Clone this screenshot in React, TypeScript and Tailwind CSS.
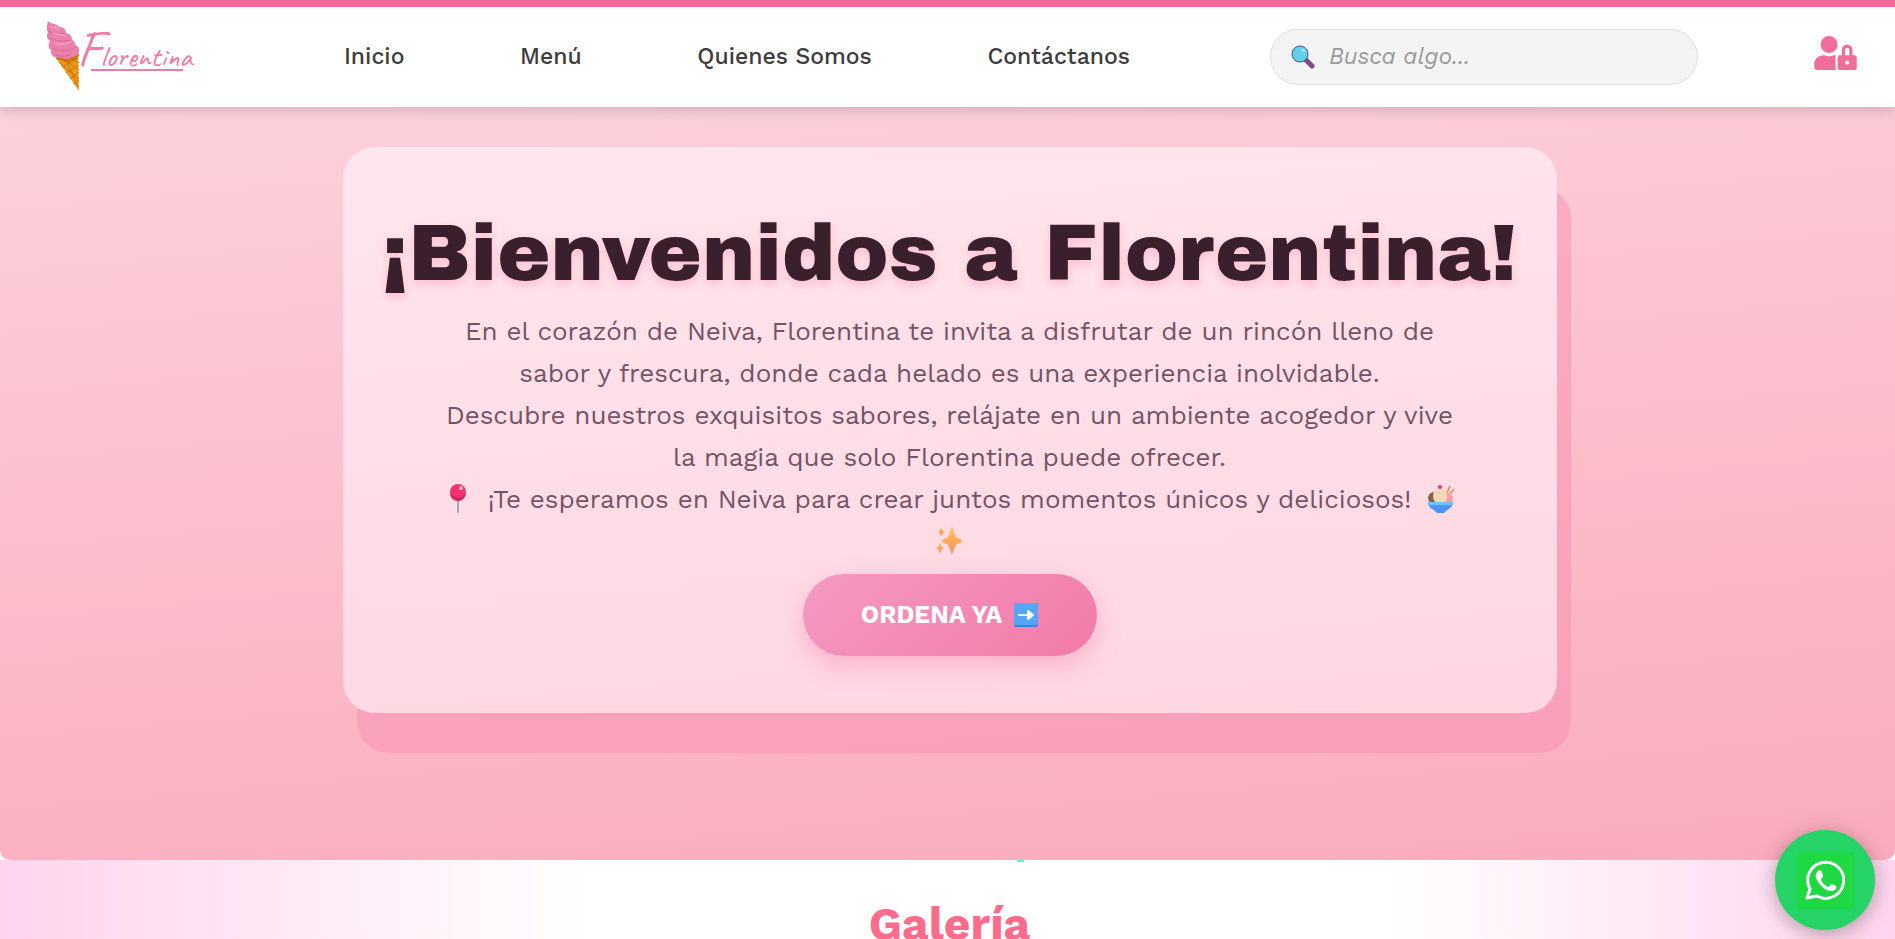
import React from "react";
import { FaUserLock } from "react-icons/fa";

const links = ["Inicio", "Menú", "Quienes Somos", "Contáctanos"];

export default function App() {
  return (
    <div className="min-h-screen bg-white font-['Work_Sans',Inter,sans-serif]">
      <Header />
      <main>
        <Hero />
        <Gallery />
      </main>
      <WhatsAppButton />
    </div>
  );
}

function Header() {
  return (
    <header className="relative z-10 flex h-[107px] items-center border-t-[7px] border-[#f26c99] bg-white pr-[38px] pb-[2px] pl-[44px] shadow-[0_4px_12px_rgba(0,0,0,0.15)]">
      <a href="#" aria-label="Florentina" className="mr-[144px] shrink-0">
        <Logo />
      </a>
      <nav className="flex grow items-center pt-[2px]">
        <ul className="flex grow justify-between whitespace-nowrap">
          {links.map((link) => (
            <li key={link}>
              <a href="#" className="text-[23px] font-medium text-[#3d3d3d]">
                {link}
              </a>
            </li>
          ))}
        </ul>
      </nav>
      {/*Search*/}
      <div className="relative mt-[2px] mr-[116px] ml-[140px] w-[428px]">
        <input
          type="text"
          aria-label="Buscar"
          placeholder="Busca algo..."
          className="h-14 w-full rounded-full border border-[#ddd] bg-[#f4f4f4] pr-5 pb-[2px] pl-[58px] text-[23px] text-[#333] italic placeholder:text-[#999] focus:outline-none"
        />
        <Magnifier />
      </div>
      <a href="#" aria-label="Iniciar sesión" className="-mt-1.5">
        <FaUserLock className="h-[34px] w-[43px] text-[#f26c99]" />
      </a>
    </header>
  );
}

function Hero() {
  return (
    <section className="flex justify-center rounded-b-[10px] bg-[linear-gradient(175deg,#fcd2dc_0%,#fcc3d0_35%,#faabbd_100%)] pt-10 pr-10 pb-[147px] pl-11">
      <div className="flex w-full max-w-[1214px] flex-col items-center rounded-[32px] bg-[linear-gradient(175deg,#ffe6ed,#ffd6e2)] pt-[50px] pb-[57px] text-center shadow-[14px_40px_0_rgba(247,144,176,0.5)]">
        <h1 className="font-['Archivo_Black',Inter,sans-serif] text-[80px] leading-[113px] font-normal whitespace-nowrap text-[#3a1f2d] [text-shadow:0_4px_10px_rgba(255,107,149,0.3)]">
          ¡Bienvenidos a Florentina!
        </h1>
        <p className="text-[26px] leading-[42px] font-normal text-[#755264]">
          En el corazón de Neiva, Florentina te invita a disfrutar de un rincón lleno de
          <br />
          sabor y frescura, donde cada helado es una experiencia inolvidable.
          <br />
          Descubre nuestros exquisitos sabores, relájate en un ambiente acogedor y vive
          <br />
          la magia que solo Florentina puede ofrecer.
          <br />
          <span className="flex items-center justify-center gap-4">
            <Pin />
            ¡Te esperamos en Neiva para crear juntos momentos únicos y deliciosos!
            <IceCream />
          </span>
          <span className="flex h-[42px] items-center justify-center">
            <Sparkles />
          </span>
        </p>
        <button className="mt-3 flex h-[82px] w-[294px] items-center justify-center gap-3 rounded-full bg-[linear-gradient(135deg,#f49ac2,#f27aa8)] text-[25px] font-bold text-white shadow-[0_10px_25px_rgba(242,122,168,0.4)]">
          ORDENA YA
          <ArrowBadge />
        </button>
      </div>
    </section>
  );
}

function Gallery() {
  return (
    <section className="relative bg-[linear-gradient(90deg,#ffd4ee_0%,#fff_31%,#fff_73%,#ffd4ee_100%)] pt-9 pb-4 pl-1">
      <div className="absolute top-0 left-[1017px] h-[2px] w-[7px] bg-[#4fffcf]" />
      <h2 className="text-center text-[46px] leading-[56px] font-bold text-[#ff6b8b]">
        Galería
      </h2>
    </section>
  );
}

function WhatsAppButton() {
  return (
    <a
      href="#"
      aria-label="WhatsApp"
      className="fixed right-5 bottom-[9px] z-20 flex size-[100px] items-center justify-center rounded-full bg-[#25d366] shadow-[0_4px_20px_rgba(0,0,0,0.3)]"
    >
      <span className="flex size-[57px] items-center justify-center bg-[#1fd943]">
        <WhatsAppIcon />
      </span>
    </a>
  );
}

function WhatsAppIcon() {
  return (
    <svg viewBox="0 0 40 40" className="size-10">
      <path
        d="M2 38 5 29A18 18 0 1 1 12 36Z"
        fill="none"
        stroke="#fff"
        strokeWidth="3"
        strokeLinejoin="round"
      />
      <path
        d="M13 11c1-1 3-1 4 1l1 4c0 2-2 2-2 4 2 4 4 5 7 7 2 0 2-3 4-3l4 2c1 1 0 3-1 4-3 2-7 1-10-1-4-3-7-6-9-11-1-3 0-5 2-7Z"
        fill="#fff"
      />
    </svg>
  );
}

function Logo() {
  return (
    <svg viewBox="0 0 156 72" className="mt-[2px] h-[72px] w-[156px]">
      <path d="M12 37 34 34 35 70Z" fill="#f09a12" />
      <path
        d="M12 38c4 2 8 1 10 4 3-2 8-2 13-7v-2H12Z"
        fill="#cf7411"
      />
      <path
        d="m15 41 20 17M20 38l15 11M28 38l7 4M34 37 18 46M35 44 22 52M35 51l-9 7M35 59l-5 4M23 40l11 26"
        stroke="#c87513"
        strokeWidth="1"
        fill="none"
      />
      <path
        d="M4 0c2 3 9 2 11 6 4 0 7 2 7 6 4 1 6 3 6 7 3 1 3 3 3 5 3 1 5 3 4 6 0 3-2 5-6 6-3 0-4 2-6 2-3 0-5-2-8-1C10 37 6 34 7 29 4 27 4 23 6 20 3 18 2 14 4 11 2 8 3 4 4 0Z"
        fill="#ec7fab"
      />
      <path
        d="M4 9c4 4 10 4 16 3M5 16c5 4 13 5 21 3M8 27c8 4 17 3 24-1M10 33c5 3 12 3 17 0"
        stroke="#d96a97"
        strokeWidth="1"
        fill="none"
      />
      <path
        d="M6 5c3 2 6 1 9 3M9 12c5 2 9 1 12 3M11 22c6 2 11 1 16-1"
        stroke="#f9bcd3"
        strokeWidth="1"
        fill="none"
      />
      <text
        x="33"
        y="45"
        fill="#f07aa6"
        className="font-[Caveat,'Dancing_Script',Lato,sans-serif]"
      >
        <tspan fontSize="52">F</tspan>
        <tspan fontSize="30">lorentina</tspan>
      </text>
      <path d="M47 49h92" stroke="#f07aa6" strokeWidth="2" />
    </svg>
  );
}

function Magnifier() {
  return (
    <svg viewBox="0 0 24 24" className="absolute top-4 left-[21px] size-6">
      <path d="m15 15 6 6" stroke="#7c4a86" strokeWidth="5" strokeLinecap="round" />
      <circle cx="9" cy="9" r="8" fill="#62d0ec" stroke="#4a5599" strokeWidth="1" />
      <path d="m12 5 1 1" stroke="#c9f1fb" strokeWidth="2" strokeLinecap="round" />
    </svg>
  );
}

function Pin() {
  return (
    <svg viewBox="0 0 28 32" className="h-8 w-7">
      <path d="M14 15v14" stroke="#a9a2b8" strokeWidth="2" strokeLinecap="round" />
      <circle cx="14" cy="9" r="8" fill="#f5316f" />
      <path d="M6 10a8 8 0 0 0 16 0c-3 6-12 6-16 0Z" fill="#cf2460" />
      <circle cx="17" cy="5" r="2" fill="#ffb3ca" />
    </svg>
  );
}

function IceCream() {
  return (
    <svg viewBox="0 0 28 32" className="h-8 w-7">
      <path d="m20 10 3-7M23 11l4-5" stroke="#dd9a6c" strokeWidth="2" />
      <circle cx="7" cy="15" r="6" fill="#8b5f4d" />
      <circle cx="20" cy="16" r="6" fill="#ff9a9d" />
      <ellipse cx="13" cy="13" rx="7" ry="8" fill="#f0d8b8" />
      <circle cx="13" cy="4" r="2" fill="#f4317f" />
      <path d="M1 19h25c0 5-4 7-7 9l-2 2h-7l-2-2c-3-2-7-4-7-9Z" fill="#4f95ff" />
      <path d="M1 19h25l-1 3H2Z" fill="#6fc4fb" />
    </svg>
  );
}

function Sparkles() {
  return (
    <svg viewBox="0 0 28 28" className="size-7">
      <defs>
        <linearGradient id="spark" x1="0" y1="0" x2="0" y2="1">
          <stop offset="0" stopColor="#ffc94a" />
          <stop offset="1" stopColor="#ff8a68" />
        </linearGradient>
      </defs>
      <g fill="url(#spark)">
        <path d="M17 0c1 0 2 8 4 10 2 2 6 2 6 4s-4 2-6 4c-2 2-3 9-4 9s-2-7-4-9c-2-2-6-2-6-4s4-2 6-4c2-2 3-10 4-10Z" />
        <path d="M6 0c1 3 2 4 4 5-2 1-3 2-4 5C5 7 5 6 3 5c2-1 2-2 3-5Z" />
        <path d="M5 15c1 4 2 5 4 6-2 1-3 2-4 6-1-4-2-5-4-6 2-1 3-2 4-6Z" />
      </g>
    </svg>
  );
}

function ArrowBadge() {
  return (
    <svg viewBox="0 0 24 24" className="size-6">
      <rect width="24" height="24" rx="2" fill="#3f83df" />
      <rect width="24" height="22" rx="2" fill="#55a5fa" />
      <path
        d="M5 12h9M14 8l5 4-5 4Z"
        fill="#fff"
        stroke="#fff"
        strokeWidth="2"
        strokeLinecap="round"
        strokeLinejoin="round"
      />
    </svg>
  );
}
